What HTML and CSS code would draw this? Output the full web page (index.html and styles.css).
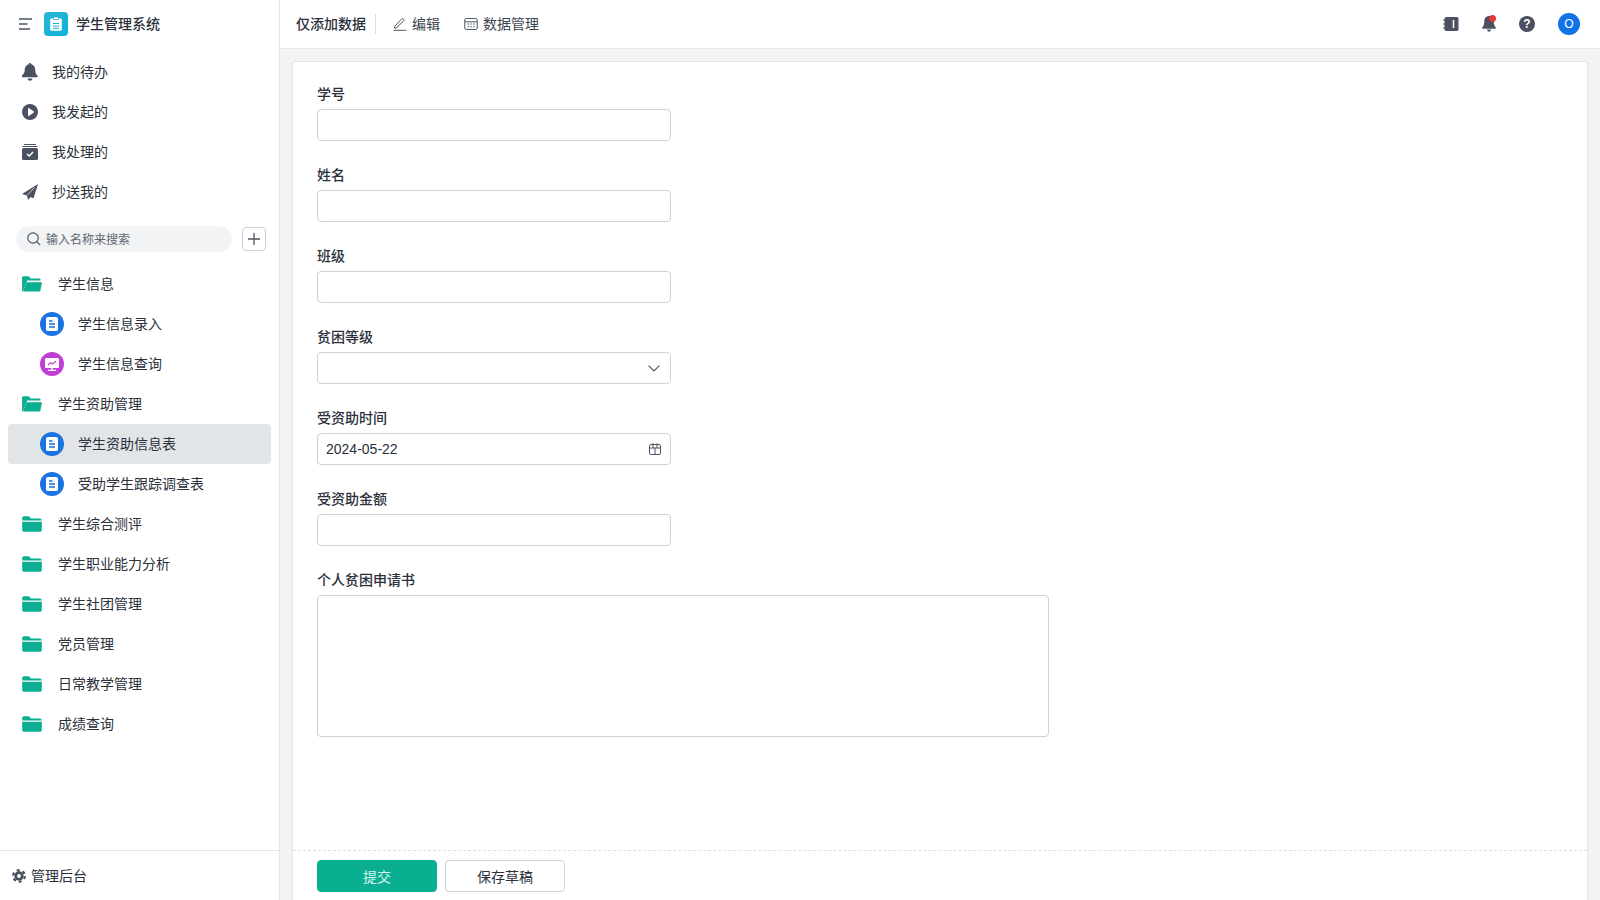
FILE: index.html
```html
<!DOCTYPE html>
<html lang="zh-CN">
<head>
<meta charset="utf-8">
<title>学生管理系统</title>
<link rel="stylesheet" href="styles.css">
</head>
<body>
<svg class="defs" width="0" height="0" aria-hidden="true">
  <defs>
    <symbol id="folder-open" viewBox="0 0 20 16">
      <path d="M1.500 15.600c-.8 0-1.400-.6-1.400-1.400V1.600C.1.800.7.200 1.500.200h5.200l2 2.200h8.600c.8 0 1.300.6 1.300 1.300v.9H5.200L.9 15.200z" fill="#0aae90"/>
      <path d="M4.600 6.200h14.800c.4 0 .6.300.5.700l-1.500 7.700c-.1.600-.6 1-1.200 1H1.600c-.4 0-.6-.3-.5-.6z" fill="#0aae90"/>
    </symbol>
    <symbol id="folder" viewBox="0 0 20 16">
      <path d="M2 .2h5l2 2.200h9c1 0 1.800.8 1.800 1.800v.3H.2V2C.2 1 1 .2 2 .2z" fill="#0aae90"/>
      <path d="M.2 5.800h19.600v8.200c0 1-.8 1.800-1.800 1.800H2c-1 0-1.800-.8-1.800-1.800z" fill="#0aae90"/>
    </symbol>
    <symbol id="doc" viewBox="0 0 24 24">
      <circle cx="12" cy="12" r="12" fill="#1a73e0"/>
      <rect x="6" y="5" width="12" height="14" rx="1.600" fill="#fff"/>
      <path d="M9 9h3.500M9 12h6M9 15h6" stroke="#1a73e0" stroke-width="1.300"/>
    </symbol>
    <symbol id="chart" viewBox="0 0 24 24">
      <circle cx="12" cy="12" r="12" fill="#c03fd6"/>
      <rect x="5" y="6" width="14" height="10" rx="1.200" fill="#fff"/>
      <path d="M8 13l2.500-2.200 2 1.200L16 9" fill="none" stroke="#c03fd6" stroke-width="1.200"/>
      <path d="M12 16v2M8 18.300h8" stroke="#fff" stroke-width="1.300"/>
    </symbol>
  </defs>
</svg>
<div class="app">
  <aside class="sidebar">
    <div class="brand">
      <svg class="menu-icon" viewBox="0 0 14 12" width="14" height="12"><path d="M0 1h13M0 6h8.500M0 11h11" stroke="#4b5563" stroke-width="1.500"/></svg>
      <span class="logo"><svg viewBox="0 0 12 14" width="12" height="14"><path d="M1.400 1.600h2V3h5.200V1.600h2c.7 0 1.200.5 1.200 1.200v9.800c0 .7-.5 1.200-1.200 1.200H1.400c-.7 0-1.200-.5-1.200-1.200V2.800c0-.7.500-1.200 1.200-1.200z" fill="#fff"/><rect x="4" y=".2" width="4" height="2" rx=".5" fill="#fff"/><path d="M3 6.500h6M3 9h6M3 11.300h6" stroke="#17b1d6" stroke-width="1"/></svg></span>
      <span class="brand-name">学生管理系统</span>
    </div>
    <nav class="quick">
      <a class="quick-item">
        <svg viewBox="0 0 16 18" width="16" height="18"><path d="M8 0c.8 0 1.300.6 1.300 1.300 2.500.6 3.900 2.700 3.900 5.200 0 3.500 1 4.800 2.300 6.200.5.600.2 1.600-.7 1.600H.5c-.9 0-1.200-1-.7-1.600C1.100 11.300 2.800 10 2.800 6.500c0-2.500 1.400-4.600 3.900-5.200C6.700.6 7.200 0 8 0zM5.600 15.500h4.800c0 1.300-1.100 2.300-2.400 2.300s-2.400-1-2.400-2.300z" fill="#4b5161"/></svg>
        <span>我的待办</span>
      </a>
      <a class="quick-item">
        <svg viewBox="0 0 16 16" width="16" height="16"><circle cx="8" cy="8" r="8" fill="#4b5161"/><path d="M6 4.500c0-.4.400-.6.800-.4l5 3.400c.3.200.3.700 0 .9l-5 3.500c-.4.200-.8 0-.8-.5z" fill="#fff"/></svg>
        <span>我发起的</span>
      </a>
      <a class="quick-item">
        <svg viewBox="0 0 16 16" width="16" height="16"><path d="M3 0h10c.6 0 1 .4 1 1H2c0-.6.400-1 1-1zM1.500 2h13c.6 0 1 .4 1 1H.5c0-.6.400-1 1-1z" fill="#4b5161"/><rect y="4" width="16" height="12" rx="1.600" fill="#4b5161"/><path d="M5 10l2.200 2L11 8" fill="none" stroke="#fff" stroke-width="1.500"/></svg>
        <span>我处理的</span>
      </a>
      <a class="quick-item">
        <svg viewBox="0 0 16 16" width="16" height="16"><path d="M16 0L0 10l5 1.500 1 4.500 2.500-3 3 1.300z" fill="#4b5161"/><path d="M12.500 3.500L5.500 11" stroke="#fff" stroke-width=".7"/></svg>
        <span>抄送我的</span>
      </a>
    </nav>
    <div class="search-row">
      <div class="search">
        <svg viewBox="0 0 14 14" width="14" height="14"><circle cx="6" cy="6" r="5.200" fill="none" stroke="#4b5563" stroke-width="1.200"/><path d="M9.700 9.700l3.500 3.500" stroke="#4b5563" stroke-width="1.200"/></svg>
        <span>输入名称来搜索</span>
      </div>
      <button class="add-btn" type="button"><svg viewBox="0 0 12 12" width="12" height="12"><path d="M6 0v12M0 6h12" stroke="#4b5563" stroke-width="1.300"/></svg></button>
    </div>
    <div class="tree">
      <a class="tree-item group"><svg class="folder-icon"><use href="#folder-open"/></svg><span>学生信息</span></a>
      <a class="tree-item child"><svg class="app-icon"><use href="#doc"/></svg><span>学生信息录入</span></a>
      <a class="tree-item child"><svg class="app-icon"><use href="#chart"/></svg><span>学生信息查询</span></a>
      <a class="tree-item group"><svg class="folder-icon"><use href="#folder-open"/></svg><span>学生资助管理</span></a>
      <a class="tree-item child active"><svg class="app-icon"><use href="#doc"/></svg><span>学生资助信息表</span></a>
      <a class="tree-item child"><svg class="app-icon"><use href="#doc"/></svg><span>受助学生跟踪调查表</span></a>
      <a class="tree-item group"><svg class="folder-icon"><use href="#folder"/></svg><span>学生综合测评</span></a>
      <a class="tree-item group"><svg class="folder-icon"><use href="#folder"/></svg><span>学生职业能力分析</span></a>
      <a class="tree-item group"><svg class="folder-icon"><use href="#folder"/></svg><span>学生社团管理</span></a>
      <a class="tree-item group"><svg class="folder-icon"><use href="#folder"/></svg><span>党员管理</span></a>
      <a class="tree-item group"><svg class="folder-icon"><use href="#folder"/></svg><span>日常教学管理</span></a>
      <a class="tree-item group"><svg class="folder-icon"><use href="#folder"/></svg><span>成绩查询</span></a>
    </div>
    <div class="admin">
      <svg viewBox="0 0 14 14" width="14" height="14"><circle cx="7" cy="7" r="4.700" fill="#4b5161"/><circle cx="7" cy="7" r="5.800" fill="none" stroke="#4b5161" stroke-width="2.200" stroke-dasharray="3 3.073"/><circle cx="7" cy="7" r="1.900" fill="#fff"/></svg>
      <span>管理后台</span>
    </div>
  </aside>
  <div class="main">
    <header class="topbar">
      <span class="page-title">仅添加数据</span>
      <span class="divider"></span>
      <a class="tool">
        <svg viewBox="0 0 14 14" width="14" height="14"><path d="M1.500 9.500L8.800 1.800c.4-.4 1-.4 1.400 0l.5.500c.4.400.4 1 0 1.400L3.400 11H1.500zM.5 13.300h12.800" fill="none" stroke="#4b5563" stroke-width="1"/></svg>
        <span>编辑</span>
      </a>
      <a class="tool">
        <svg viewBox="0 0 14 14" width="14" height="14"><rect x=".8" y="1.500" width="12.400" height="11" rx="1.500" fill="none" stroke="#4b5563" stroke-width="1"/><path d="M.8 4.800h12.400M3.500 7h1.500M6.300 7h1.500M9 7h1.500M3.500 9.800h1.500M6.300 9.800h1.500M9 9.800h1.500" stroke="#4b5563" stroke-width="1"/></svg>
        <span>数据管理</span>
      </a>
      <div class="top-actions">
        <svg class="notebook" viewBox="0 0 16 16" width="16" height="16"><rect x="1.500" y="1" width="14" height="14" rx="1.800" fill="#4b5161"/><path d="M0 4h3M0 8h3M0 12h3" stroke="#4b5161" stroke-width="1.200"/><path d="M10.500 4v8" stroke="#fff" stroke-width="1.500"/></svg>
        <span class="bell">
          <svg viewBox="0 0 14 16" width="14" height="16"><path d="M7 0c2.900 0 4.700 2.400 4.700 5.200 0 3.500 1 5 2 6.200.4.500.1 1.300-.6 1.300H.9c-.7 0-1-.8-.6-1.300 1-1.200 2-2.700 2-6.200C2.300 2.400 4.100 0 7 0zM5 13.500h4c0 1.200-.9 2.200-2 2.200s-2-1-2-2.200z" fill="#4b5161"/></svg>
          <i class="dot"></i>
        </span>
        <svg viewBox="0 0 16 16" width="16" height="16"><circle cx="8" cy="8" r="8" fill="#4b5161"/><text class="q-mark" x="8" y="12">?</text></svg>
        <span class="avatar">O</span>
      </div>
    </header>
    <main class="content">
      <section class="card">
        <form class="form">
          <div class="field"><label>学号</label><div class="input"></div></div>
          <div class="field"><label>姓名</label><div class="input"></div></div>
          <div class="field"><label>班级</label><div class="input"></div></div>
          <div class="field"><label>贫困等级</label><div class="input"><svg class="suffix chevron" viewBox="0 0 12 7" width="12" height="7"><path d="M.6.600L6 6l5.400-5.400" fill="none" stroke="#4b5563" stroke-width="1.100"/></svg></div></div>
          <div class="field"><label>受资助时间</label><div class="input"><span>2024-05-22</span><svg class="suffix" viewBox="0 0 12 12" width="12" height="12"><rect x=".5" y="1.500" width="11" height="10" rx="1.500" fill="none" stroke="#4b5563"/><path d="M.5 5h11M4 .2v4.800M8 .2v4.800M6 5v6.500" stroke="#4b5563" stroke-width="1"/></svg></div></div>
          <div class="field"><label>受资助金额</label><div class="input"></div></div>
          <div class="field"><label>个人贫困申请书</label><div class="textarea"></div></div>
        </form>
        <footer class="actions">
          <button class="btn primary" type="button">提交</button>
          <button class="btn" type="button">保存草稿</button>
        </footer>
      </section>
    </main>
  </div>
</div>
</body>
</html>
```
FILE: styles.css
```css
* { box-sizing: border-box; }
html, body { margin: 0; height: 100%; overflow: hidden; }
body {
  font-family: "Liberation Sans", "Noto Sans CJK SC", sans-serif;
  font-size: 14px;
  color: #2b303b;
  background: #fff;
}
.defs { position: absolute; }
.app { display: flex; height: 900px; }

.sidebar {
  width: 280px;
  flex: none;
  display: flex;
  flex-direction: column;
  border-right: 1px solid #e3e5e8;
  background: #fff;
}
.brand { display: flex; align-items: center; height: 48px; padding-left: 19px; }
.logo {
  width: 24px; height: 24px; margin-left: 11px; border-radius: 4px;
  display: flex; align-items: center; justify-content: center;
  background: linear-gradient(135deg, #2bb8d0, #0bb1e0);
}
.brand-name { margin-left: 8px; margin-bottom: 2px; font-weight: 500; color: #2b303b; }
.quick { display: flex; flex-direction: column; }
.quick-item { display: flex; align-items: center; height: 40px; }
.quick-item:first-child { margin-top: 4px; }
.quick-item svg { margin-left: 22px; width: 16px; flex: none; }
.quick-item span { margin-left: 14px; margin-bottom: 2px; }
.search-row { display: flex; align-items: center; margin-top: 14px; padding-left: 16px; height: 26px; }
.search {
  width: 216px; height: 26px; border-radius: 13px; background: #f1f3f5;
  display: flex; align-items: center; padding-left: 11px; gap: 4px;
  font-size: 12px; color: #5f6672;
}
.search span { margin-bottom: 2px; margin-left: 1px; }
.add-btn {
  width: 24px; height: 24px; margin-left: 10px; padding: 0;
  display: flex; align-items: center; justify-content: center;
  background: #fff; border: 1px solid #ccd0d5; border-radius: 4px;
}
.tree { display: flex; flex-direction: column; margin-top: 12px; flex: 1; }
.tree-item { display: flex; align-items: center; height: 40px; margin: 0 8px; border-radius: 4px; width: 263px; }
.tree-item span { margin-bottom: 2px; }
.group { padding-left: 14px; }
.group span { margin-left: 16px; }
.child { padding-left: 32px; }
.child span { margin-left: 14px; }
.active { background: #e2e5e8; }
.folder-icon { width: 20px; height: 16px; flex: none; }
.app-icon { width: 24px; height: 24px; flex: none; }
.admin {
  height: 50px; border-top: 1px solid #e3e5e8;
  display: flex; align-items: center; padding-left: 12px; gap: 5px;
}
.admin span { margin-bottom: 2px; }

.main { flex: 1; min-width: 0; display: flex; flex-direction: column; background: #f1f3f5; }
.topbar {
  height: 49px; flex: none; display: flex; align-items: center;
  background: #fff; border-bottom: 1px solid #e5e7ea; padding-left: 16px;
}
.page-title { font-weight: 500; margin-bottom: 2px; }
.divider { width: 1px; height: 20px; background: #d9dcdf; margin: 0 9px; }
.tool { display: flex; align-items: center; gap: 5px; margin-left: 8px; margin-right: 16px; color: #3d4451; }
.tool span { margin-bottom: 2px; }
.top-actions { margin-left: auto; display: flex; align-items: center; padding-right: 20px; }
.notebook { margin-right: 23px; }
.bell { position: relative; display: flex; margin-right: 23px; }
.dot { position: absolute; top: -1px; right: 0; width: 7px; height: 7px; border-radius: 50%; background: #e5383b; }
.q-mark { font-size: 12px; font-weight: 700; fill: #fff; text-anchor: middle; }
.avatar {
  width: 22px; height: 22px; margin-left: 23px; border-radius: 50%;
  display: flex; align-items: center; justify-content: center;
  background: #1273e6; color: #fff; font-size: 12px;
}

.content { flex: 1; min-height: 0; padding: 12px 12px 0; }
.card {
  height: 839px; display: flex; flex-direction: column;
  background: #fff; border: 1px solid #e3e5e8; border-bottom: 0; border-radius: 4px 4px 0 0;
}
.form { flex: 1; min-height: 0; padding: 22px 24px 0; display: flex; flex-direction: column; gap: 24px; }
.field { display: flex; flex-direction: column; gap: 4px; }
.field label { font-weight: 500; line-height: 21px; height: 21px; color: #2b303b; display: block; }
.input {
  width: 354px; height: 32px; padding: 0 8px;
  display: flex; align-items: center; justify-content: space-between;
  border: 1px solid #ced2d6; border-radius: 4px; background: #fff;
}
.suffix { margin-right: 1px; }
.chevron { margin-left: auto; margin-right: 2px; }
.textarea { width: 732px; height: 142px; border: 1px solid #ced2d6; border-radius: 4px; background: #fff; }
.actions {
  height: 50px; flex: none; display: flex; align-items: center; gap: 8px;
  padding: 0 24px; border-top: 1px dashed #dcdfe3;
}
.btn {
  width: 120px; height: 32px; padding: 0; font: inherit;
  border: 1px solid #ced2d6; border-radius: 4px; background: #fff; color: #2b303b;
}
.primary { background: #0aae90; border-color: #0aae90; color: #d8f5ee; }
```
